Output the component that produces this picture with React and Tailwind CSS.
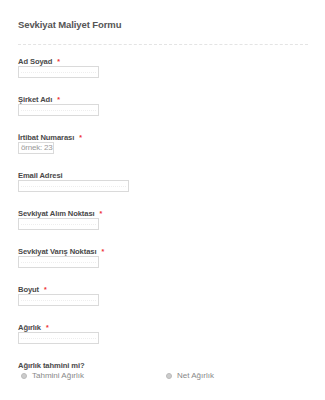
import React from 'react';

const fields = [
  { label: 'Ad Soyad', required: true, width: 'w-[81px]' },
  { label: 'Şirket Adı', required: true, width: 'w-[81px]' },
  { label: 'İrtibat Numarası', required: true, width: 'w-[36px]', placeholder: 'örnek: 23' },
  { label: 'Email Adresi', required: false, width: 'w-[111px]' },
  { label: 'Sevkiyat Alım Noktası', required: true, width: 'w-[81px]' },
  { label: 'Sevkiyat Varış Noktası', required: true, width: 'w-[81px]' },
  { label: 'Boyut', required: true, width: 'w-[81px]' },
  { label: 'Ağırlık', required: true, width: 'w-[81px]' },
];

export default function App() {
  return (
    <div className="w-[325px] h-[400px] bg-white overflow-hidden font-['Liberation_Sans',Arial,sans-serif] pl-[18px] pr-[17px]">
      {/* Header */}
      <div className="pt-[19px] pb-[13px] border-b border-dashed border-[#e4e4e4]">
        <h1 className="text-[9.5px] leading-[12px] font-bold text-[#555] tracking-[-0.1px]">Sevkiyat Maliyet Formu</h1>
      </div>

      <div className="pt-[12px] flex flex-col gap-[17px]">
        {fields.map((f) => (
          <div key={f.label} className="flex flex-col">
            <div className="flex items-start h-[9px] text-[7.6px] leading-[9px] font-bold text-[#4a4a4a] tracking-[-0.1px]">
              <span>{f.label}</span>
              {f.required && <span className="ml-[5px] text-[#e33] text-[7px]">*</span>}
            </div>
            <div className={`${f.width} h-[12px] border border-[#dadada] bg-white flex items-center px-[2px] overflow-hidden`}>
              {f.placeholder ? (
                <span className="text-[8px] leading-none text-[#999] whitespace-nowrap tracking-[-0.2px]">{f.placeholder}</span>
              ) : (
                <div className="w-full border-b border-dotted border-[#eee]" />
              )}
            </div>
          </div>
        ))}

        <div className="flex flex-col">
          <div className="h-[9px] text-[7.6px] leading-[9px] font-bold text-[#4a4a4a] tracking-[-0.1px]">Ağırlık tahmini mi?</div>
          <div className="flex">
            <label className="w-[145px] flex items-center gap-[5px] pl-[3px] text-[8px] leading-[11px] text-[#888]">
              <span className="w-[6px] h-[6px] rounded-full bg-[#ccc] border border-[#bbb]" />
              Tahmini Ağırlık
            </label>
            <label className="flex items-center gap-[5px] pl-[3px] text-[8px] leading-[11px] text-[#888]">
              <span className="w-[6px] h-[6px] rounded-full bg-[#ccc] border border-[#bbb]" />
              Net Ağırlık
            </label>
          </div>
        </div>
      </div>
    </div>
  );
}
